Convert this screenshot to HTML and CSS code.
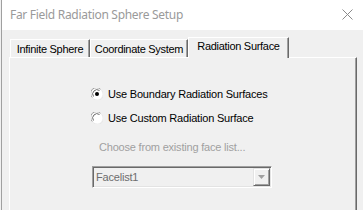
FILE: index.html
```html
<!DOCTYPE html>
<html lang="en">
<head>
    <meta charset="UTF-8">
    <title>Far Field Radiation Sphere Setup</title>
    <link rel="stylesheet" href="styles.css">
</head>
<body>
    <div class="window">
        <div class="titlebar">
            <span class="title">Far Field Radiation Sphere Setup</span>
            <svg class="close" width="11" height="11" viewBox="0 0 11 11">
                <path d="M0.5 0.5 L10.5 10.5 M10.5 0.5 L0.5 10.5" stroke="#8a8a8a" stroke-width="1" fill="none"/>
            </svg>
        </div>

        <div class="content">
            <div class="tabs">
                <div class="tab tab-sphere">Infinite Sphere</div>
                <div class="tab tab-coord">Coordinate System</div>
                <div class="tab tab-surface active">Radiation Surface</div>
            </div>

            <div class="panel">
                <div class="options">
                    <label class="radio">
                        <svg width="12" height="12" viewBox="0 0 12 12">
                            <circle cx="6" cy="6" r="5.5" fill="#fff"/>
                            <path d="M1.3 9.5 A5.5 5.5 0 0 1 9.5 1.3" stroke="#a0a0a0" fill="none"/>
                            <path d="M2.5 8.5 A4.3 4.3 0 0 1 8.5 2.5" stroke="#6a6a6a" fill="none"/>
                            <path d="M10.7 2.5 A5.5 5.5 0 0 1 2.5 10.7" stroke="#e8e8e8" fill="none"/>
                            <circle cx="6" cy="6" r="2" fill="#000"/>
                        </svg>
                        Use Boundary Radiation Surfaces
                    </label>
                    <label class="radio">
                        <svg width="12" height="12" viewBox="0 0 12 12">
                            <circle cx="6" cy="6" r="5.5" fill="#fff"/>
                            <path d="M1.3 9.5 A5.5 5.5 0 0 1 9.5 1.3" stroke="#a0a0a0" fill="none"/>
                            <path d="M2.5 8.5 A4.3 4.3 0 0 1 8.5 2.5" stroke="#6a6a6a" fill="none"/>
                            <path d="M10.7 2.5 A5.5 5.5 0 0 1 2.5 10.7" stroke="#e8e8e8" fill="none"/>
                        </svg>
                        Use Custom Radiation Surface
                    </label>
                </div>

                <div class="hint">Choose from existing face list...</div>

                <div class="combo">
                    <span class="combo-text">Facelist1</span>
                    <span class="combo-btn">
                        <svg width="7" height="4" viewBox="0 0 7 4">
                            <path d="M0 0 H7 L3.5 4 Z" fill="#a0a0a0"/>
                        </svg>
                    </span>
                </div>
            </div>
        </div>
    </div>
</body>
</html>
```

FILE: styles.css
```css
body {
    margin: 0;
    background-color: #f0f0f0;
    font-family: "Liberation Sans", Arial, sans-serif;
    overflow: hidden;
}
.window {
    margin-left: 1px;
    border-left: 1px solid #a0a0a0;
    height: 210px;
}
.titlebar {
    height: 30px;
    background: #fff;
    display: flex;
    align-items: center;
    padding-left: 8px;
    padding-right: 10px;
}
.title {
    flex: 1;
    font-family: "Noto Sans", sans-serif;
    font-size: 12px;
    letter-spacing: -0.3px;
    color: #9a9a9a;
    padding-bottom: 1px;
}
.close {
    margin-bottom: 2px;
}
.content {
    padding: 7px 6px 0 7px;
}
.tabs {
    display: flex;
    align-items: flex-end;
    height: 20px;
    padding-left: 1px;
    position: relative;
    z-index: 1;
}
.tab {
    box-sizing: border-box;
    height: 18px;
    border-top: 1px solid #fff;
    border-left: 1px solid #fff;
    border-right: 1px solid #696969;
    box-shadow: inset -1px 0 #a0a0a0;
    font-size: 11px;
    letter-spacing: -0.3px;
    color: #000;
    text-align: center;
    line-height: 16px;
    padding-top: 1px;
}
.tab-sphere {
    width: 80px;
}
.tab-coord {
    width: 98px;
}
.tab-surface {
    width: 101px;
}
.tab.active {
    height: 21px;
    margin-bottom: -1px;
    background: #f0f0f0;
    padding-top: 0;
}
.panel {
    box-sizing: border-box;
    height: 153px;
    border-top: 1px solid #fff;
    border-left: 1px solid #fff;
    border-right: 1px solid #696969;
    box-shadow: inset -1px 0 #a0a0a0;
}
.options {
    padding-top: 24px;
    padding-left: 81px;
}
.radio {
    display: flex;
    align-items: center;
    height: 24px;
    font-size: 11px;
    letter-spacing: -0.2px;
    color: #000;
}
.radio svg {
    margin-right: 5px;
}
.hint {
    margin-top: 11px;
    padding-left: 89px;
    height: 13px;
    line-height: 13px;
    font-size: 11px;
    letter-spacing: -0.2px;
    color: #a0a0a0;
}
.combo {
    box-sizing: border-box;
    margin: 12px 0 0 82px;
    width: 180px;
    height: 22px;
    border-top: 1px solid #a0a0a0;
    border-left: 1px solid #a0a0a0;
    border-bottom: 1px solid #fff;
    border-right: 1px solid #fff;
    box-shadow: inset 1px 1px #696969, inset -1px -1px #e3e3e3;
    display: flex;
    align-items: center;
    padding: 1px;
}
.combo-text {
    flex: 1;
    padding-left: 2px;
    font-size: 11px;
    letter-spacing: -0.2px;
    color: #6d6d6d;
}
.combo-btn {
    box-sizing: border-box;
    width: 17px;
    height: 18px;
    border-top: 1px solid #e3e3e3;
    border-left: 1px solid #e3e3e3;
    border-right: 1px solid #696969;
    border-bottom: 1px solid #696969;
    box-shadow: inset 1px 1px #fff, inset -1px -1px #a0a0a0;
    display: flex;
    align-items: center;
    justify-content: center;
}
```
